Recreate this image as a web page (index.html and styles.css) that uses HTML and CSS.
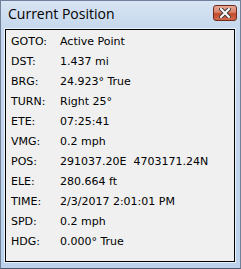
FILE: index.html
```html
<!DOCTYPE html>
<html>
<head>
<meta charset="utf-8">
<link rel="stylesheet" href="styles.css">
</head>
<body>
<div class="window">
  <div class="titlebar">
    <div class="title">Current Position</div>
    <div class="close">
      <svg width="12" height="10" viewBox="0 0 12 10">
        <path d="M2 1 L10 9 M10 1 L2 9" stroke="#3b3b3b" stroke-width="4" stroke-linecap="square"/>
        <path d="M2 1 L10 9 M10 1 L2 9" stroke="#ffffff" stroke-width="2" stroke-linecap="square"/>
      </svg>
    </div>
  </div>
  <div class="client">
    <div class="grid">
      <div class="lbl">GOTO:</div><div class="val">Active Point</div>
      <div class="lbl">DST:</div><div class="val">1.437 mi</div>
      <div class="lbl">BRG:</div><div class="val">24.923° True</div>
      <div class="lbl">TURN:</div><div class="val">Right 25°</div>
      <div class="lbl">ETE:</div><div class="val">07:25:41</div>
      <div class="lbl">VMG:</div><div class="val">0.2 mph</div>
      <div class="lbl">POS:</div><div class="val">291037.20E&nbsp; 4703171.24N</div>
      <div class="lbl">ELE:</div><div class="val">280.664 ft</div>
      <div class="lbl">TIME:</div><div class="val">2/3/2017 2:01:01 PM</div>
      <div class="lbl">SPD:</div><div class="val">0.2 mph</div>
      <div class="lbl">HDG:</div><div class="val">0.000° True</div>
    </div>
  </div>
</div>
</body>
</html>
```
FILE: styles.css
```css
html, body {
  margin: 0;
  padding: 0;
  background: #ffffff;
}
.window {
  width: 241px;
  height: 269px;
  box-sizing: border-box;
  border: 1px solid #6f829a;
  border-bottom-color: #4a5869;
  background: linear-gradient(to bottom, #d7e4f3 0px, #c6d8ed 28px, #bcd1ea 100%);
  display: flex;
  flex-direction: column;
}
.titlebar {
  height: 28px;
  flex: none;
  box-sizing: border-box;
  padding: 0 3px 0 7px;
  display: flex;
  justify-content: space-between;
  align-items: flex-start;
}
.title {
  font-family: "Open Sans", "Noto Sans", sans-serif;
  font-size: 14px;
  line-height: 20px;
  padding-top: 3px;
  color: #000000;
}
.close {
  margin-top: 4px;
  width: 24px;
  height: 16px;
  box-sizing: border-box;
  border: 1px solid #6b2b1d;
  border-radius: 3px;
  background: linear-gradient(to bottom, #e9a897 0%, #d8826b 45%, #c44a2b 55%, #d06a4e 100%);
  display: flex;
  align-items: center;
  justify-content: center;
}
.close svg {
  display: block;
}
.client {
  flex: 1;
  margin: 0 5px 6px 4px;
  border: 1px solid #000000;
  box-shadow: 0 0 0 1px #e8f0f9;
  background: #f0f0f0;
}
.grid {
  display: grid;
  grid-template-columns: 49px 1fr;
  grid-auto-rows: 20px;
  padding: 2px 0 0 5px;
  font-family: "DejaVu Sans", Verdana, sans-serif;
  font-size: 11px;
  line-height: 20px;
  color: #000000;
  white-space: nowrap;
}
```
